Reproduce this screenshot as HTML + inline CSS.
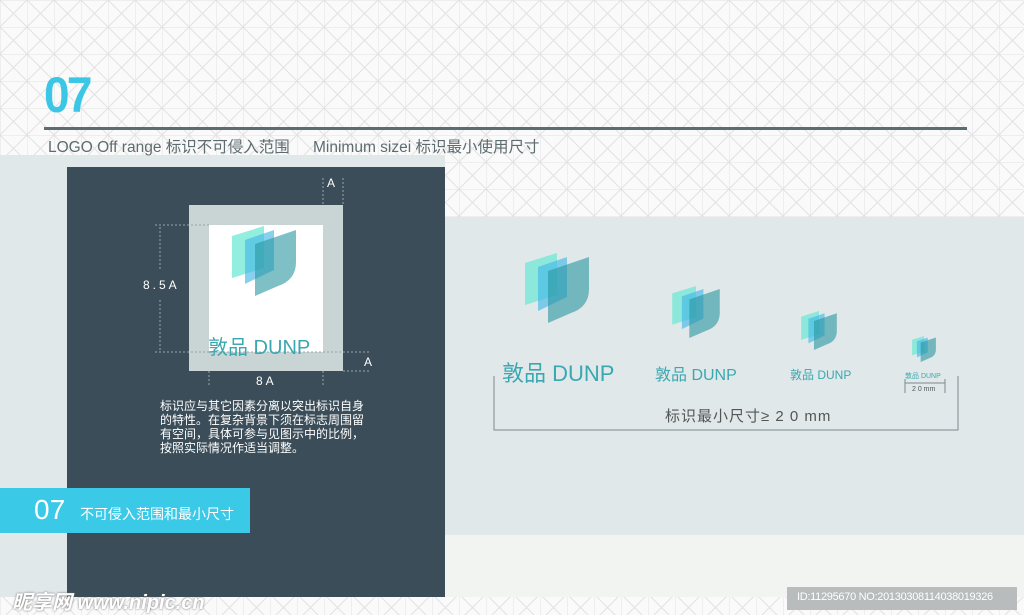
<!DOCTYPE html>
<html><head><meta charset="utf-8"><style>
*{margin:0;padding:0;box-sizing:border-box}
body{width:1024px;height:615px;position:relative;overflow:hidden;background:#fafafa;font-family:"Liberation Sans","Noto Sans CJK SC",sans-serif}
.a{position:absolute}
</style></head><body>
<svg class="a" style="left:0;top:0" width="1024" height="615">
<defs>
<pattern id="p" width="27" height="27" patternUnits="userSpaceOnUse">
<rect width="27" height="27" fill="#fafafa"/>
<path d="M0 0H27M0 0V27M0 0L27 27M27 0L0 27" stroke="#e2e2e2" stroke-width="1" fill="none"/>
</pattern>
<symbol id="lg" viewBox="0 0 64 70">
<path d="M0 10L32 0V42L0 52Z" fill="rgba(110,232,212,.75)"/>
<path d="M13 14L42 4V44L13 58Z" fill="rgba(70,185,230,.65)"/>
<path d="M23 18L64 4V36Q64 54 46 60L23 70Z" fill="rgba(40,150,160,.6)"/>
</symbol>
</defs>
<rect width="1024" height="615" fill="url(#p)"/>
<rect x="0" y="155" width="445" height="62" fill="#e1e8ea"/>
<rect x="0" y="217" width="1024" height="318" fill="#e1e8ea"/>
<rect x="0" y="535" width="1024" height="62" fill="#f2f4f2"/>
<rect x="0" y="535" width="67" height="62" fill="#e1e8ea"/>
<rect x="67" y="167" width="378" height="430" fill="#3b4d58"/>
<rect x="44" y="127" width="923" height="3" fill="#5d6c70"/>
<rect x="189" y="205" width="154" height="166" fill="#c9d4d5"/>
<rect x="209" y="225" width="114" height="127" fill="#fff"/>
<g stroke="#9aa5a8" stroke-dasharray="2,2" stroke-width="1" fill="none">
<path d="M323 178V205M343 178V205M155 225H209M155 352H370M343 371H370M209 371V385M323 371V385M160 227V270M160 300V350"/>
</g>
<use href="#lg" x="232" y="226" width="64" height="70"/>
<use href="#lg" x="525" y="253" width="64" height="70"/>
<use href="#lg" x="672" y="286" width="48" height="52"/>
<use href="#lg" x="801" y="311" width="36" height="39"/>
<use href="#lg" x="912" y="336" width="24" height="26"/>
<path d="M494 376V430H958V376" stroke="#7d8a8d" fill="none"/>
<path d="M905 379V393M945 379V393M905 383H945" stroke="#7d8a8d" fill="none"/>
<rect x="787" y="587" width="230" height="23" fill="#b9bcbc"/>
</svg>
<div class="a" style="left:44px;top:70px;font-size:50px;color:#3cc6e6;font-weight:bold;letter-spacing:-3px;line-height:1;transform:scaleX(.92);transform-origin:left">07</div>
<div class="a" style="left:48px;top:135px;font-size:15.5px;color:#5d6c70">LOGO Off range 标识不可侵入范围</div>
<div class="a" style="left:313px;top:135px;font-size:15.5px;color:#5d6c70">Minimum sizei 标识最小使用尺寸</div>
<div class="a" style="left:327px;top:176px;font-size:12px;color:#fff">A</div>
<div class="a" style="left:364px;top:355px;font-size:12px;color:#fff">A</div>
<div class="a" style="left:143px;top:278px;font-size:12px;color:#fff;letter-spacing:3px">8.5A</div>
<div class="a" style="left:256px;top:374px;font-size:12px;color:#fff;letter-spacing:3px">8A</div>
<div class="a" style="left:208px;top:331px;font-size:20px;color:#3aa8b0;white-space:nowrap">敦品 DUNP</div>
<div class="a" style="left:160px;top:399px;width:215px;font-size:12px;line-height:14px;color:#fff">标识应与其它因素分离以突出标识自身的特性。在复杂背景下须在标志周围留有空间，具体可参与见图示中的比例，按照实际情况作适当调整。</div>
<div class="a" style="left:0;top:488px;width:250px;height:45px;background:#3bc9e8"></div>
<div class="a" style="left:34px;top:494px;font-size:28px;color:#fff;line-height:32px">07</div>
<div class="a" style="left:80px;top:504px;font-size:14px;color:#fff">不可侵入范围和最小尺寸</div>
<div class="a" style="left:502px;top:356px;font-size:22px;color:#3aa8b0;white-space:nowrap">敦品 DUNP</div>
<div class="a" style="left:655px;top:361px;font-size:16px;color:#3aa8b0;white-space:nowrap">敦品 DUNP</div>
<div class="a" style="left:790px;top:366px;font-size:12px;color:#3aa8b0;white-space:nowrap">敦品 DUNP</div>
<div class="a" style="left:905px;top:371px;font-size:7px;color:#3aa8b0;white-space:nowrap">敦品 DUNP</div>
<div class="a" style="left:912px;top:386px;font-size:7px;color:#555">2 0 mm</div>
<div class="a" style="left:665px;top:405px;font-size:15px;color:#555;letter-spacing:1px">标识最小尺寸≥ 2 0 mm</div>
<div class="a" style="left:12px;top:586px;font-size:20px;color:#fff;font-weight:bold;font-style:italic;text-shadow:0 0 2px #666">昵享网 www.nipic.cn</div>
<div class="a" style="left:797px;top:591px;font-size:11px;color:#fff;letter-spacing:-.3px">ID:11295670 NO:20130308114038019326</div>
</body></html>
